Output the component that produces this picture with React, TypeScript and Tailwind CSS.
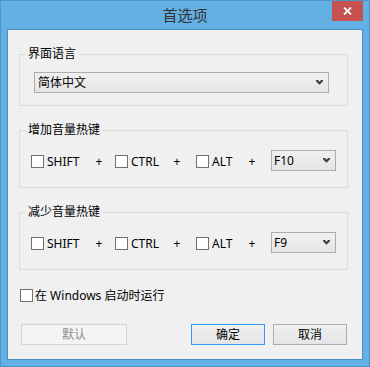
const font = "font-['Noto_Sans','Noto_Sans_CJK_SC',sans-serif]";

const Chevron = () => (
  <svg width="7" height="5" viewBox="0 0 7 5" className="shrink-0">
    <polygon points="0,0 2,0 3.5,1.8 5,0 7,0 7,1.2 3.5,4.8 0,1.2" fill="#404040" />
  </svg>
);

function Combo({ value, className }: { value: string; className: string }) {
  return (
    <div
      className={`flex h-[21px] items-center justify-between border border-[#acacac] bg-linear-to-b from-[#f0f0f0] to-[#e5e5e5] pr-[5px] ${className}`}
    >
      <span className="text-[12px] leading-[16px] text-black">{value}</span>
      <Chevron />
    </div>
  );
}

function Check({ label, className = "" }: { label: string; className?: string }) {
  return (
    <div className={`flex items-center ${className}`}>
      <span className="h-[13px] w-[13px] shrink-0 border border-[#707070] bg-white" />
      <span className="ml-[3px] text-[12px] leading-[13px] text-black">{label}</span>
    </div>
  );
}

const Plus = ({ className }: { className: string }) => (
  <span className={`mt-[5px] text-center text-[12px] leading-[13px] text-black ${className}`}>+</span>
);

function HotkeyGroup({ title, keyName, className }: { title: string; keyName: string; className: string }) {
  return (
    <fieldset className={`ml-[11px] w-[329px] border border-[#dcdcdc] pb-[16px] pt-[12px] ${className}`}>
      <legend className="ml-[5px] px-[3px] text-[12px] leading-[16px] text-black">{title}</legend>
      <div className="ml-[11px] flex items-start">
        <Check label="SHIFT" className="mt-[5px] w-[60px]" />
        <Plus className="w-[16px]" />
        <Check label="CTRL" className="ml-[8px] mt-[5px] w-[56px]" />
        <Plus className="w-[12px]" />
        <Check label="ALT" className="ml-[13px] mt-[5px] w-[49px]" />
        <Plus className="w-[14px]" />
        <Combo value={keyName} className="ml-[12px] w-[65px] pl-[2px]" />
      </div>
    </fieldset>
  );
}

export default function App() {
  return (
    <div
      className={`flex h-[367px] w-[370px] flex-col border border-[#4f94c7] bg-[#63b0e4] px-[6px] ${font}`}
    >
      {/* title bar */}
      <div className="relative -mx-[6px] flex h-[28px] shrink-0 items-center justify-center">
        <span className="text-[15px] leading-[20px] text-[#333]">首选项</span>
        <button className="absolute right-[6px] top-0 flex h-[20px] w-[31px] items-center justify-center bg-[#c75050]">
          <svg width="9" height="8" viewBox="0 0 9 8">
            <path d="M1 0.5L8 7.5M8 0.5L1 7.5" stroke="#fff" strokeWidth="1.8" />
          </svg>
        </button>
      </div>

      {/* client area */}
      <div className="flex h-[331px] shrink-0 flex-col border border-[#4a8fc4] bg-[#f0f0f0] pt-[16px]">
        <fieldset className="ml-[11px] w-[329px] border border-[#dcdcdc] pb-[12px] pt-[10px]">
          <legend className="ml-[5px] px-[3px] text-[12px] leading-[16px] text-black">界面语言</legend>
          <Combo value="简体中文" className="ml-[14px] w-[295px] pl-[3px]" />
        </fieldset>

        <HotkeyGroup title="增加音量热键" keyName="F10" className="mt-[16px]" />
        <HotkeyGroup title="减少音量热键" keyName="F9" className="mt-[16px]" />

        <div className="ml-[12px] mt-[19px] flex h-[13px] items-center">
          <span className="h-[13px] w-[13px] shrink-0 border border-[#707070] bg-white" />
          <span className="ml-[2px] text-[12px] leading-[13px] text-black">在 Windows 启动时运行</span>
        </div>

        <div className="mt-[22px] flex items-center">
          <button
            disabled
            className="ml-[13px] h-[21px] w-[106px] border border-[#d3d3d3] bg-[#f4f4f4] text-[12px] leading-[16px] text-[#8d8d8d]"
          >
            默认
          </button>
          <button className="ml-auto h-[21px] w-[74px] border border-[#3399ff] bg-linear-to-b from-[#f0f0f0] to-[#e5e5e5] text-[12px] leading-[16px] text-black">
            确定
          </button>
          <button className="ml-[8px] mr-[15px] h-[21px] w-[74px] border border-[#acacac] bg-linear-to-b from-[#f0f0f0] to-[#e5e5e5] text-[12px] leading-[16px] text-black">
            取消
          </button>
        </div>
      </div>
    </div>
  );
}
